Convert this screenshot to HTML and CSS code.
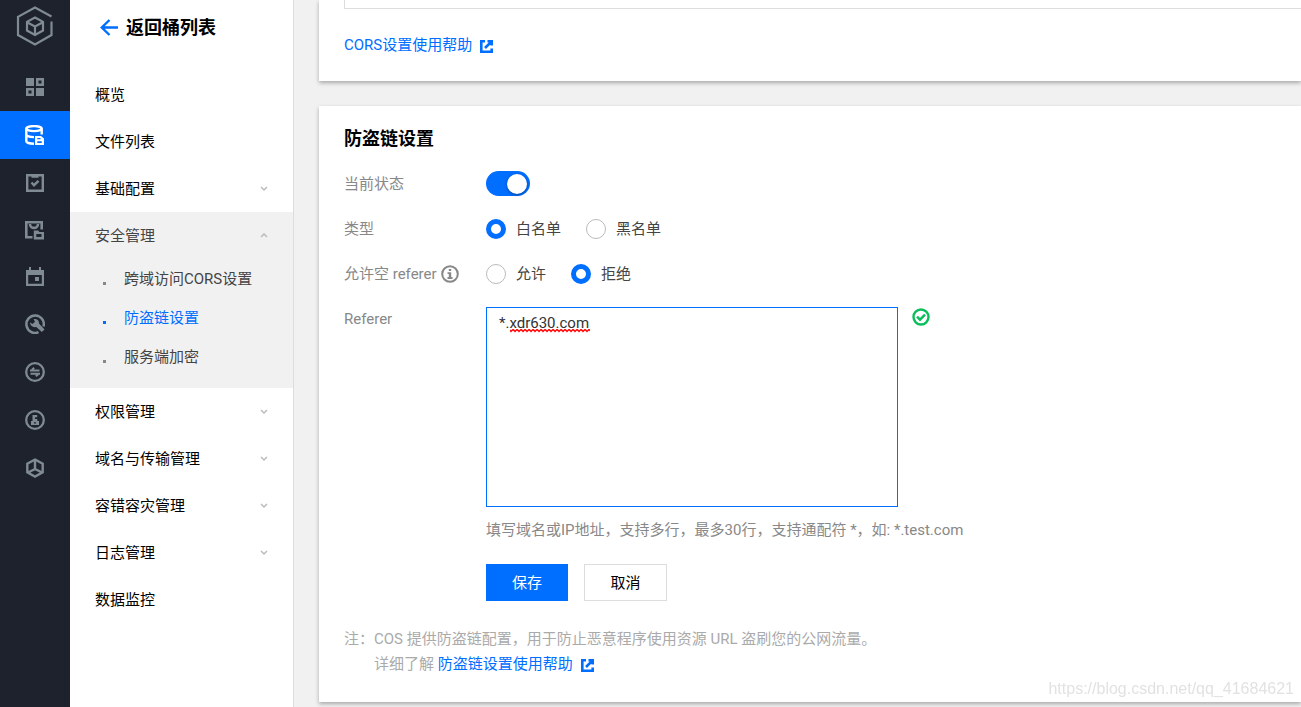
FILE: index.html
```html
<!DOCTYPE html>
<html lang="zh-CN">
<head>
<meta charset="utf-8">
<meta name="viewport" content="width=device-width, initial-scale=1">
<title>防盗链设置</title>
<link rel="stylesheet" href="styles.css">
</head>
<body>
<div class="app">
  <nav class="rail" aria-label="产品">
    <a class="rail-logo" href="#" aria-label="首页">
      <svg width="38" height="40" viewBox="0 0 38 40" fill="none" stroke="#7f8a93" stroke-width="2.200">
        <path d="M35.500 10.500 19 1.500 2 10.800V29l17 9.500L35.500 29V15.500"/>
        <path d="M19 11.500 27 15.800V24.500L19 29 11 24.500V15.800ZM11.500 16.500 19 20.500 26.500 16.500M19 20.500V28.500"/>
      </svg>
    </a>
    <ul class="rail-group rail-group-tall">
      <li><a class="rail-link" href="#" aria-label="概览">
        <svg width="18" height="18" viewBox="0 0 18 18" fill="#7f8a93"><path d="M0 0h8v8H0zM10 10h8v8h-8z"/><path fill-rule="evenodd" d="M10 0h8v8h-8zm2.500 2.500v3h3v-3zM0 10h8v8H0zm2.500 2.500v3h3v-3z"/></svg>
      </a></li>
      <li><a class="rail-link rail-link-active" href="#" aria-label="存储桶列表" aria-current="page">
        <svg width="20" height="20" viewBox="0 0 20 20"><g fill="none" stroke="#fff" stroke-width="2.400"><ellipse cx="9" cy="3.600" rx="7.700" ry="2.500"/><path d="M1.300 3.600V16c0 1.600 3.500 2.800 7.700 2.800M16.700 3.600V9.500M1.300 9.500c0 1.600 3.500 2.600 7.700 2.600"/></g><path fill="#fff" fill-rule="evenodd" d="M10 11h6l3 2.500V20h-9zm2.300 2v1.300h3.200V13zm0 3.300v1.600h4.400v-1.600z"/></svg>
      </a></li>
    </ul>
    <ul class="rail-group">
      <li><a class="rail-link" href="#" aria-label="任务">
        <svg width="18" height="18" viewBox="0 0 18 18" fill="none" stroke="#7f8a93" stroke-width="2.400"><path d="M1.200 1.200h15.600v15.600H1.200zM5.500 8.500 8 11.200 12.500 6.800M5.500 2.600h7"/></svg>
      </a></li>
      <li><a class="rail-link" href="#" aria-label="文件存储">
        <svg width="20" height="20" viewBox="0 0 20 20"><g fill="none" stroke="#7f8a93" stroke-width="2.600"><path d="M7.500 17.200H1.300V2.300h15.400V9.500M5 4c0 5.200 8 5.200 8 0"/></g><path fill="#7f8a93" fill-rule="evenodd" d="M8.800 10.500h4.500l1 1.500H19v7.500H8.800zM11.300 14v3h5.200v-3z"/></svg>
      </a></li>
      <li><a class="rail-link" href="#" aria-label="日程">
        <svg width="18" height="20" viewBox="0 0 18 20" fill="#7f8a93"><path fill-rule="evenodd" d="M0 3h3V0h2v3h8V0h2v3h3v16H0zm2.200 5v8.800h13.600V8z"/><path d="M9 10h4v4H9z"/></svg>
      </a></li>
    </ul>
    <ul class="rail-group rail-group-tall">
      <li><a class="rail-link" href="#" aria-label="工具">
        <svg width="20" height="20" viewBox="0 0 20 20"><path fill="none" stroke="#7f8a93" stroke-width="2.500" d="M18.500 12.500A8.700 8.700 0 1 0 13.500 18.200"/><path fill="#7f8a93" d="M5 8.500 7.500 10 10 7.800 8.600 5.200c2.400-.8 5.600.8 5.400 4.300L19.500 15.500 16.800 18 11.300 13c-3.500.7-6.300-1.500-6.300-4.500z"/></svg>
      </a></li>
      <li><a class="rail-link" href="#" aria-label="迁移">
        <svg width="20" height="20" viewBox="0 0 20 20" fill="none" stroke="#7f8a93" stroke-width="2.300"><circle cx="10" cy="10" r="8.800"/><path stroke-width="2" d="M5 8.500h9.500M5.500 11.800H15M7 7.700 9.200 5.800M13 12.500 10.800 14.300"/></svg>
      </a></li>
      <li><a class="rail-link" href="#" aria-label="密钥">
        <svg width="20" height="20" viewBox="0 0 20 20"><circle cx="10" cy="10" r="8.800" fill="none" stroke="#7f8a93" stroke-width="2.300"/><path fill="#7f8a93" fill-rule="evenodd" d="M7.500 5h4.700v2.200H10V9h2.300v2H14v4H6v-4h1.500zM9 12.200v1.300h2v-1.300z"/></svg>
      </a></li>
      <li><a class="rail-link" href="#" aria-label="应用集成">
        <svg width="18" height="20" viewBox="0 0 18 20" fill="none" stroke="#7f8a93" stroke-width="2.400"><path d="M9 1.500 16.700 5.700V14.300L9 18.600 1.300 14.300V5.700ZM9 2V11L2 14.500M9 11l7 3.500"/></svg>
      </a></li>
    </ul>
  </nav>

  <aside class="sidebar">
    <a class="back" href="#">
      <svg width="18" height="18" viewBox="0 0 18 18" fill="none" stroke="#006eff" stroke-width="2.400"><path d="M9.500 1 1.800 8.500l7.700 7.500M1.800 8.500H18"/></svg>
      <span>返回桶列表</span>
    </a>
    <ul class="menu">
      <li><a class="menu-link" href="#">概览</a></li>
      <li><a class="menu-link" href="#">文件列表</a></li>
      <li><a class="menu-link" href="#">基础配置<svg class="chevron" viewBox="0 0 8 6"><path d="M1 1l3 3 3-3"/></svg></a></li>
      <li class="menu-open">
        <a class="menu-link" href="#">安全管理<svg class="chevron" viewBox="0 0 8 6"><path d="M1 4l3-3 3 3"/></svg></a>
        <ul class="submenu">
          <li><a class="submenu-link" href="#">跨域访问CORS设置</a></li>
          <li><a class="submenu-link submenu-link-active" href="#" aria-current="page">防盗链设置</a></li>
          <li><a class="submenu-link" href="#">服务端加密</a></li>
        </ul>
      </li>
      <li><a class="menu-link" href="#">权限管理<svg class="chevron" viewBox="0 0 8 6"><path d="M1 1l3 3 3-3"/></svg></a></li>
      <li><a class="menu-link" href="#">域名与传输管理<svg class="chevron" viewBox="0 0 8 6"><path d="M1 1l3 3 3-3"/></svg></a></li>
      <li><a class="menu-link" href="#">容错容灾管理<svg class="chevron" viewBox="0 0 8 6"><path d="M1 1l3 3 3-3"/></svg></a></li>
      <li><a class="menu-link" href="#">日志管理<svg class="chevron" viewBox="0 0 8 6"><path d="M1 1l3 3 3-3"/></svg></a></li>
      <li><a class="menu-link" href="#">数据监控</a></li>
    </ul>
  </aside>

  <main class="main">
    <section class="card card-cors">
      <div class="table-end"></div>
      <a class="help-link" href="#">CORS设置使用帮助<svg class="external" viewBox="0 0 13 13"><path d="M5 1.300H1.300v10.400h10.400V8.500M7.500 1.300h4.200v4.200M11.700 1.300 5 8"/></svg></a>
    </section>

    <section class="card card-referer">
      <h2 class="card-title">防盗链设置</h2>
      <form class="form">
        <div class="row">
          <label class="row-label" for="status">当前状态</label>
          <input class="switch" type="checkbox" role="switch" id="status" checked>
        </div>
        <div class="row" role="radiogroup" aria-labelledby="type-label">
          <span class="row-label" id="type-label">类型</span>
          <div class="options">
            <label class="option"><input class="radio" type="radio" name="type" checked>白名单</label>
            <label class="option"><input class="radio" type="radio" name="type">黑名单</label>
          </div>
        </div>
        <div class="row" role="radiogroup" aria-labelledby="empty-label">
          <span class="row-label" id="empty-label">允许空 referer<svg class="info" viewBox="0 0 18 18"><circle cx="9" cy="9" r="7.800" fill="none" stroke="#888" stroke-width="2"/><path fill="#888" d="M7.800 4h2.400v2H7.800zM6.500 7.200h3.700V12h1.300v2h-5v-2h1.300V9H6.500z"/></svg></span>
          <div class="options">
            <label class="option"><input class="radio" type="radio" name="empty">允许</label>
            <label class="option"><input class="radio" type="radio" name="empty" checked>拒绝</label>
          </div>
        </div>
        <div class="row row-top">
          <label class="row-label" for="referer">Referer</label>
          <div class="field">
            <div class="field-line">
              <div class="field-box">
                <textarea class="textarea" id="referer" spellcheck="false">*.xdr630.com</textarea>
                <svg class="squiggle" width="80" height="4" aria-hidden="true">
                  <defs><pattern id="wave" width="4" height="4" patternUnits="userSpaceOnUse"><path d="M-1 0 1 2.500 3 .5 5 2.500" fill="none" stroke="#f00" stroke-width="1.400"/></pattern></defs>
                  <rect width="80" height="4" fill="url(#wave)"/>
                </svg>
              </div>
              <svg class="valid" viewBox="0 0 18 18" fill="none" stroke="#0abf5b" stroke-width="2.400"><circle cx="9" cy="9" r="7.500"/><path d="M5 8.700l3 3 5-5"/></svg>
            </div>
            <p class="hint">填写域名或IP地址，支持多行，最多30行，支持通配符 *，如: *.test.com</p>
            <div class="actions">
              <button class="button button-primary" type="button">保存</button>
              <button class="button" type="button">取消</button>
            </div>
          </div>
        </div>
      </form>
      <div class="note">
        <span>注：</span>
        <div>
          <p>COS 提供防盗链配置，用于防止恶意程序使用资源 URL 盗刷您的公网流量。</p>
          <p>详细了解 <a class="help-link" href="#">防盗链设置使用帮助<svg class="external" viewBox="0 0 13 13"><path d="M5 1.300H1.300v10.400h10.400V8.500M7.500 1.300h4.200v4.200M11.700 1.300 5 8"/></svg></a></p>
        </div>
      </div>
    </section>
  </main>
</div>
<div class="watermark">https://blog.csdn.net/qq_41684621</div>
</body>
</html>
```
FILE: styles.css
```css
* {
  box-sizing: border-box;
}

body {
  margin: 0;
  background: #f1f1f1;
  color: #000;
  font: 15px/24px Roboto, "Noto Sans CJK SC", sans-serif;
}

ul {
  margin: 0;
  padding: 0;
  list-style: none;
}

p {
  margin: 0;
}

a {
  color: inherit;
  text-decoration: none;
}

.app {
  display: flex;
  min-height: 100vh;
}

/* Product rail */
.rail {
  flex: none;
  width: 70px;
  background: #1e222d;
}

.rail-logo {
  display: flex;
  justify-content: center;
  padding: 6px 0 17px;
}

.rail-link {
  display: flex;
  align-items: center;
  justify-content: center;
  height: 47px;
}

.rail-group-tall .rail-link {
  height: 48px;
}

.rail-link-active {
  background: #006eff;
}

/* Bucket menu */
.sidebar {
  flex: none;
  width: 224px;
  border-right: 1px solid #ddd;
  background: #fff;
}

.back {
  display: flex;
  align-items: center;
  gap: 8px;
  height: 55px;
  padding-left: 30px;
  font-size: 18px;
  font-weight: 700;
}

.menu {
  padding-top: 16px;
}

.menu-link {
  display: flex;
  align-items: center;
  justify-content: space-between;
  height: 47px;
  padding: 0 25px;
}

.chevron {
  width: 8px;
  height: 6px;
  fill: none;
  stroke: #bbb;
  stroke-width: 1.5;
}

.menu-open {
  padding-bottom: 12px;
  background: #f1f1f1;
  color: #444;
}

.submenu-link {
  display: flex;
  align-items: center;
  gap: 18px;
  height: 39px;
  padding-left: 33px;
}

.submenu-link::before {
  width: 3px;
  height: 3px;
  margin-top: 9px;
  background: #888;
  content: "";
}

.submenu-link-active {
  color: #006eff;
}

.submenu-link-active::before {
  background: #006eff;
}

/* Content */
.main {
  flex: 1;
  min-width: 0;
  padding: 0 0 5px 25px;
}

.card {
  background: #fff;
  box-shadow: 0 2px 4px rgba(0, 0, 0, 0.3);
}

.card-cors {
  margin-bottom: 25px;
  padding: 0 0 24px 25px;
}

.table-end {
  height: 9px;
  margin-bottom: 24px;
  border: solid #ddd;
  border-width: 0 0 1px 1px;
}

.card-referer {
  padding: 20px 25px 25px;
}

.card-title {
  margin: 0 0 9px;
  font-size: 18px;
  line-height: 26px;
}

.help-link {
  color: #006eff;
}

.external {
  width: 13px;
  height: 13px;
  margin-left: 8px;
  fill: none;
  stroke: #006eff;
  stroke-width: 2.6;
  vertical-align: -3px;
}

.row {
  display: flex;
  align-items: center;
  min-height: 45px;
}

.row-top {
  align-items: flex-start;
  padding-top: 11px;
}

.row-label {
  display: flex;
  flex: none;
  align-items: center;
  gap: 4px;
  width: 142px;
  color: #888;
}

.info {
  width: 18px;
  height: 18px;
}

.switch {
  width: 44px;
  height: 25px;
  margin: 0;
  padding: 3px;
  border-radius: 13px;
  background: #bbb;
  appearance: none;
}

.switch::before {
  display: block;
  width: 20px;
  height: 20px;
  border-radius: 50%;
  background: #fff;
  box-shadow: 0 1px 3px rgba(0, 0, 0, 0.4);
  content: "";
}

.switch:checked {
  background: #006eff;
}

.switch:checked::before {
  margin-left: auto;
}

.options {
  display: flex;
  gap: 25px;
}

.option {
  display: flex;
  align-items: center;
  gap: 10px;
  color: #444;
}

.radio {
  width: 20px;
  height: 20px;
  margin: 0;
  border: 1px solid #bbb;
  border-radius: 50%;
  background: #fff;
  appearance: none;
}

.radio:checked {
  border: 5px solid #006eff;
}

.field {
  flex: 1;
  min-width: 0;
}

.field-line {
  display: flex;
  gap: 14px;
}

.field-box {
  position: relative;
  width: 412px;
}

.textarea {
  display: block;
  width: 100%;
  height: 200px;
  padding: 3px 12px;
  border: 1px solid #006eff;
  background: #fff;
  color: #333;
  font: inherit;
  outline: 0;
  resize: none;
}

.squiggle {
  position: absolute;
  top: 22px;
  left: 24px;
}

.valid {
  flex: none;
  width: 18px;
  height: 18px;
  margin-top: 1px;
}

.hint {
  margin-top: 11px;
  color: #888;
}

.actions {
  display: flex;
  gap: 16px;
  margin-top: 22px;
}

.button {
  min-width: 83px;
  height: 37px;
  padding: 0 25px;
  border: 1px solid #ddd;
  background: #fff;
  color: #000;
  font: inherit;
}

.button-primary {
  min-width: 82px;
  border-color: #006eff;
  background: #006eff;
  color: #fff;
}

.note {
  display: flex;
  margin-top: 26px;
  color: #aaa;
  line-height: 25px;
}

.watermark {
  position: fixed;
  right: 7px;
  bottom: 8px;
  color: #e2e2e2;
  font: 16px/20px "Liberation Sans", Arial, sans-serif;
}
```
